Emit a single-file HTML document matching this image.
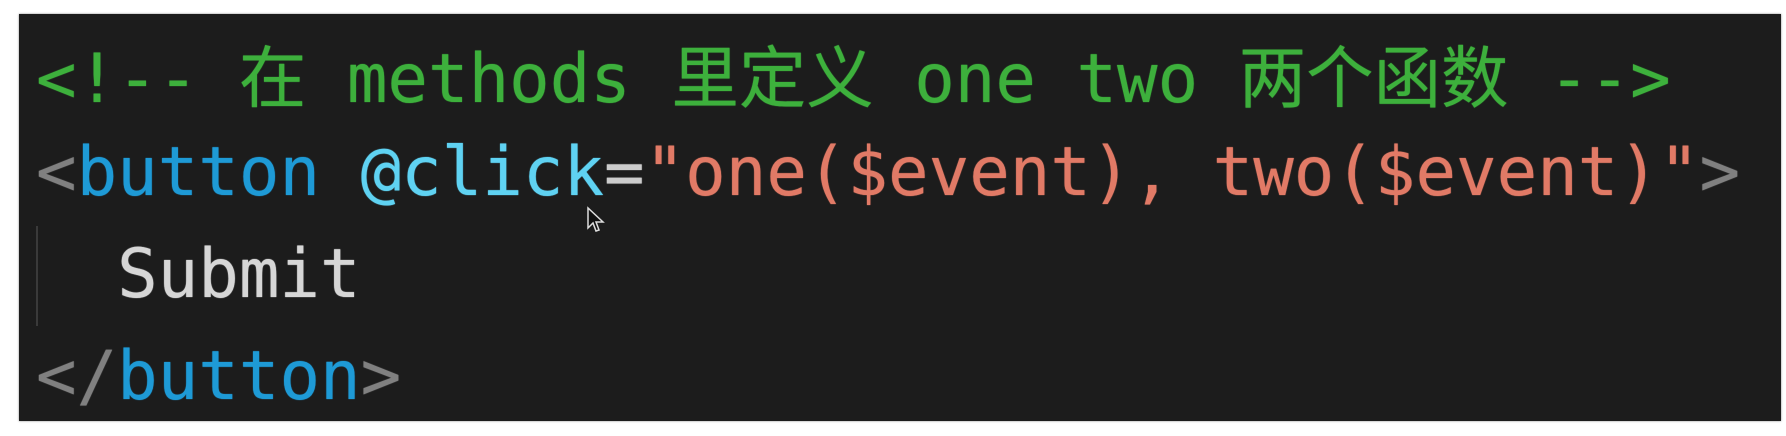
<!DOCTYPE html>
<html><head><meta charset="utf-8"><style>
html,body{margin:0;padding:0;width:1786px;height:436px;background:#fff;overflow:hidden}
.box{position:absolute;left:19px;top:14px;width:1762px;height:407px;background:#1c1c1c;box-shadow:0 0 2px #888}
.l{position:absolute;left:36px;white-space:pre;font-family:"DejaVu Sans Mono","Liberation Mono","Noto Sans CJK SC",monospace;font-size:67.4px;line-height:100px;height:100px;text-shadow:0 0 1px currentColor}
.c{color:#3db03c}.g{color:#808080}.b{color:#1e9ad6}.a{color:#5fd2f2}.s{color:#e17a66}.w{color:#d6d6d6}.e{color:#cccccc}
.cjk{font-family:"Noto Sans CJK SC",sans-serif}
.guide{position:absolute;left:36px;top:226px;width:2px;height:100px;background:#3a3a3a}
</style></head><body>
<div class="box"></div>
<div class="l c" style="top:24px">&lt;!-- <span class="cjk">在</span> methods <span class="cjk">里定义</span> one two <span class="cjk">两个函数</span> --&gt;</div>
<div class="l" style="top:122px"><span class="g">&lt;</span><span class="b">button</span> <span class="a">@click</span><span class="e">=</span><span class="s">"one($event), two($event)"</span><span class="g">&gt;</span></div>
<div class="guide"></div>
<div class="l w" style="top:224px">  Submit</div>
<div class="l" style="top:326px"><span class="g">&lt;/</span><span class="b">button</span><span class="g">&gt;</span></div>
<svg style="position:absolute;left:586px;top:206px" width="20" height="28" viewBox="0 0 20 28"><path d="M2 2 L2 22 L7 17 L10 25 L13 24 L10 16 L17 16 Z" fill="#111" stroke="#ddd" stroke-width="1.5"/></svg>
</body></html>
